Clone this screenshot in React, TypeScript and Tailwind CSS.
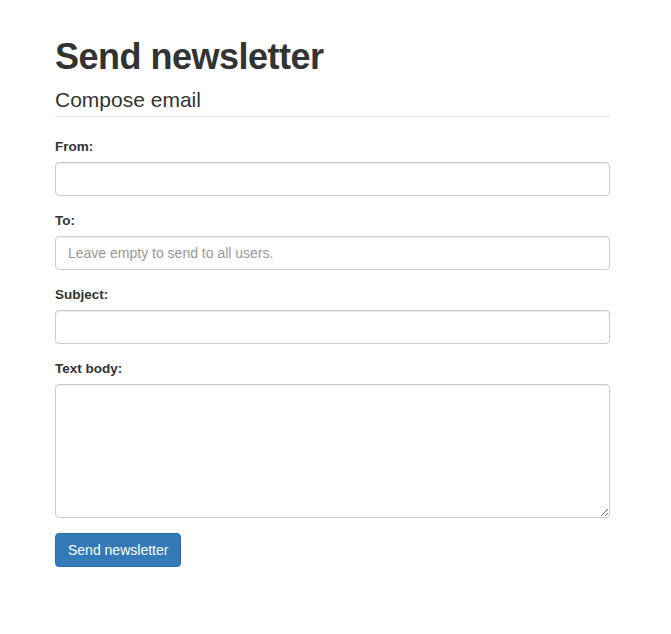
// Newsletter compose form, Bootstrap 3 look.

const font = { fontFamily: '"Liberation Sans", Arial, sans-serif' };

const inputClass =
  'block w-full h-[34px] px-3 py-[6px] text-[14px] text-[#555] bg-white border border-[#ccc] rounded-[4px] shadow-[inset_0_1px_1px_rgba(0,0,0,0.075)] placeholder:text-[#999] outline-none';

function Field({ label, children }: { label: string; children: React.ReactNode }) {
  return (
    <div className="mb-[15px]">
      <label className="block mb-[5px] text-[13.5px] leading-[20px] font-bold text-[#333]">{label}</label>
      {children}
    </div>
  );
}

export default function App() {
  return (
    <div className="min-h-[634px] bg-white" style={font}>
      <div className="ml-[55px] pt-[37px] w-[555px]">
        <h1 className="text-[36px] leading-[40px] font-bold tracking-[-0.5px] text-[#333]">Send newsletter</h1>
        <div className="mt-[9px] mb-[20px] h-[31px] pb-[2px] border-b border-[#e5e5e5] text-[21px] leading-[28px] text-[#333]">
          Compose email
        </div>
        <form onSubmit={e => e.preventDefault()}>
          <Field label="From:">
            <input type="text" className={inputClass} />
          </Field>
          <Field label="To:">
            <input type="text" className={inputClass} placeholder="Leave empty to send to all users." />
          </Field>
          <Field label="Subject:">
            <input type="text" className={inputClass} />
          </Field>
          <Field label="Text body:">
            <textarea className={inputClass + ' h-[134px]'} />
          </Field>
          <button
            type="submit"
            className="h-[34px] px-3 text-[14px] text-white bg-[#337ab7] border border-[#2e6da4] rounded-[4px]"
          >
            Send newsletter
          </button>
        </form>
      </div>
    </div>
  );
}
